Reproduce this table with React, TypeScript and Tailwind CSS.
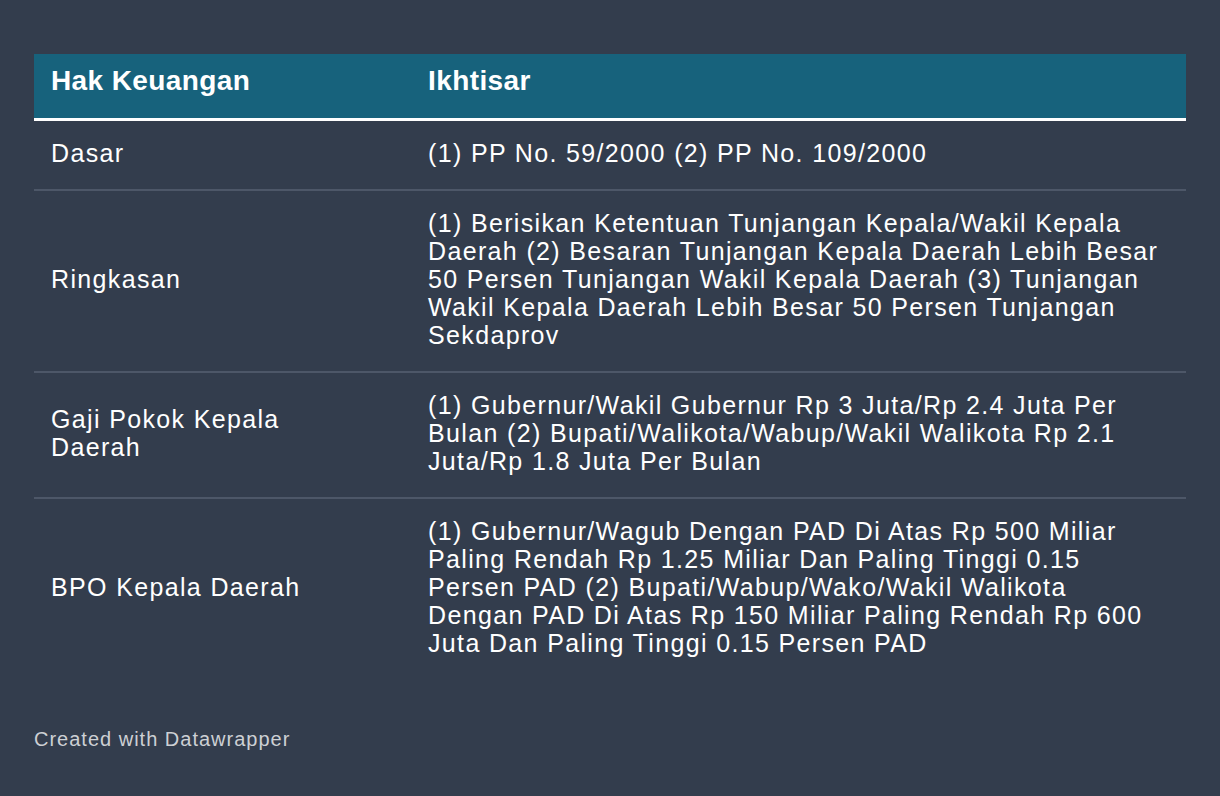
const rows = [
  { label: 'Dasar', text: '(1) PP No. 59/2000 (2) PP No. 109/2000' },
  {
    label: 'Ringkasan',
    text: '(1) Berisikan Ketentuan Tunjangan Kepala/Wakil Kepala Daerah (2) Besaran Tunjangan Kepala Daerah Lebih Besar 50 Persen Tunjangan Wakil Kepala Daerah (3) Tunjangan Wakil Kepala Daerah Lebih Besar 50 Persen Tunjangan Sekdaprov',
  },
  {
    label: 'Gaji Pokok Kepala Daerah',
    text: '(1) Gubernur/Wakil Gubernur Rp 3 Juta/Rp 2.4 Juta Per Bulan (2) Bupati/Walikota/Wabup/Wakil Walikota Rp 2.1 Juta/Rp 1.8 Juta Per Bulan',
  },
  {
    label: 'BPO Kepala Daerah',
    text: '(1) Gubernur/Wagub Dengan PAD Di Atas Rp 500 Miliar Paling Rendah Rp 1.25 Miliar Dan Paling Tinggi 0.15 Persen PAD (2) Bupati/Wabup/Wako/Wakil Walikota Dengan PAD Di Atas Rp 150 Miliar Paling Rendah Rp 600 Juta Dan Paling Tinggi 0.15 Persen PAD',
  },
]

export default function App() {
  return (
    <div className="min-h-[796px] w-full bg-[#333d4d] px-[34px] pt-[54px] font-['Liberation_Sans',Arial,sans-serif] text-white">
      <div className="w-[1152px]">
        <div className="grid grid-cols-[377px_1fr] h-[64px] bg-[#17627c] border-b-[3px] border-white text-[28px] leading-[32px] font-bold tracking-[0.4px] box-content">
          <div className="pl-[17px] pt-[11px]">Hak Keuangan</div>
          <div className="pl-[17px] pt-[11px]">Ikhtisar</div>
        </div>
        {rows.map((row, i) => (
          <div
            key={row.label}
            className={
              'grid grid-cols-[377px_1fr] text-[25px] leading-[28px] tracking-[1.35px] ' +
              (i < rows.length - 1 ? 'border-b-2 border-[#4d5768]' : '')
            }
          >
            <div className="flex items-center pl-[17px] pr-[60px] pt-[18px] pb-[22px]">{row.label}</div>
            <div className="pl-[17px] pr-[20px] pt-[18px] pb-[22px]">{row.text}</div>
          </div>
        ))}
      </div>
      <div className="mt-[48px] text-[20px] leading-[24px] tracking-[1px] text-[#cdd0d4]">Created with Datawrapper</div>
    </div>
  )
}
